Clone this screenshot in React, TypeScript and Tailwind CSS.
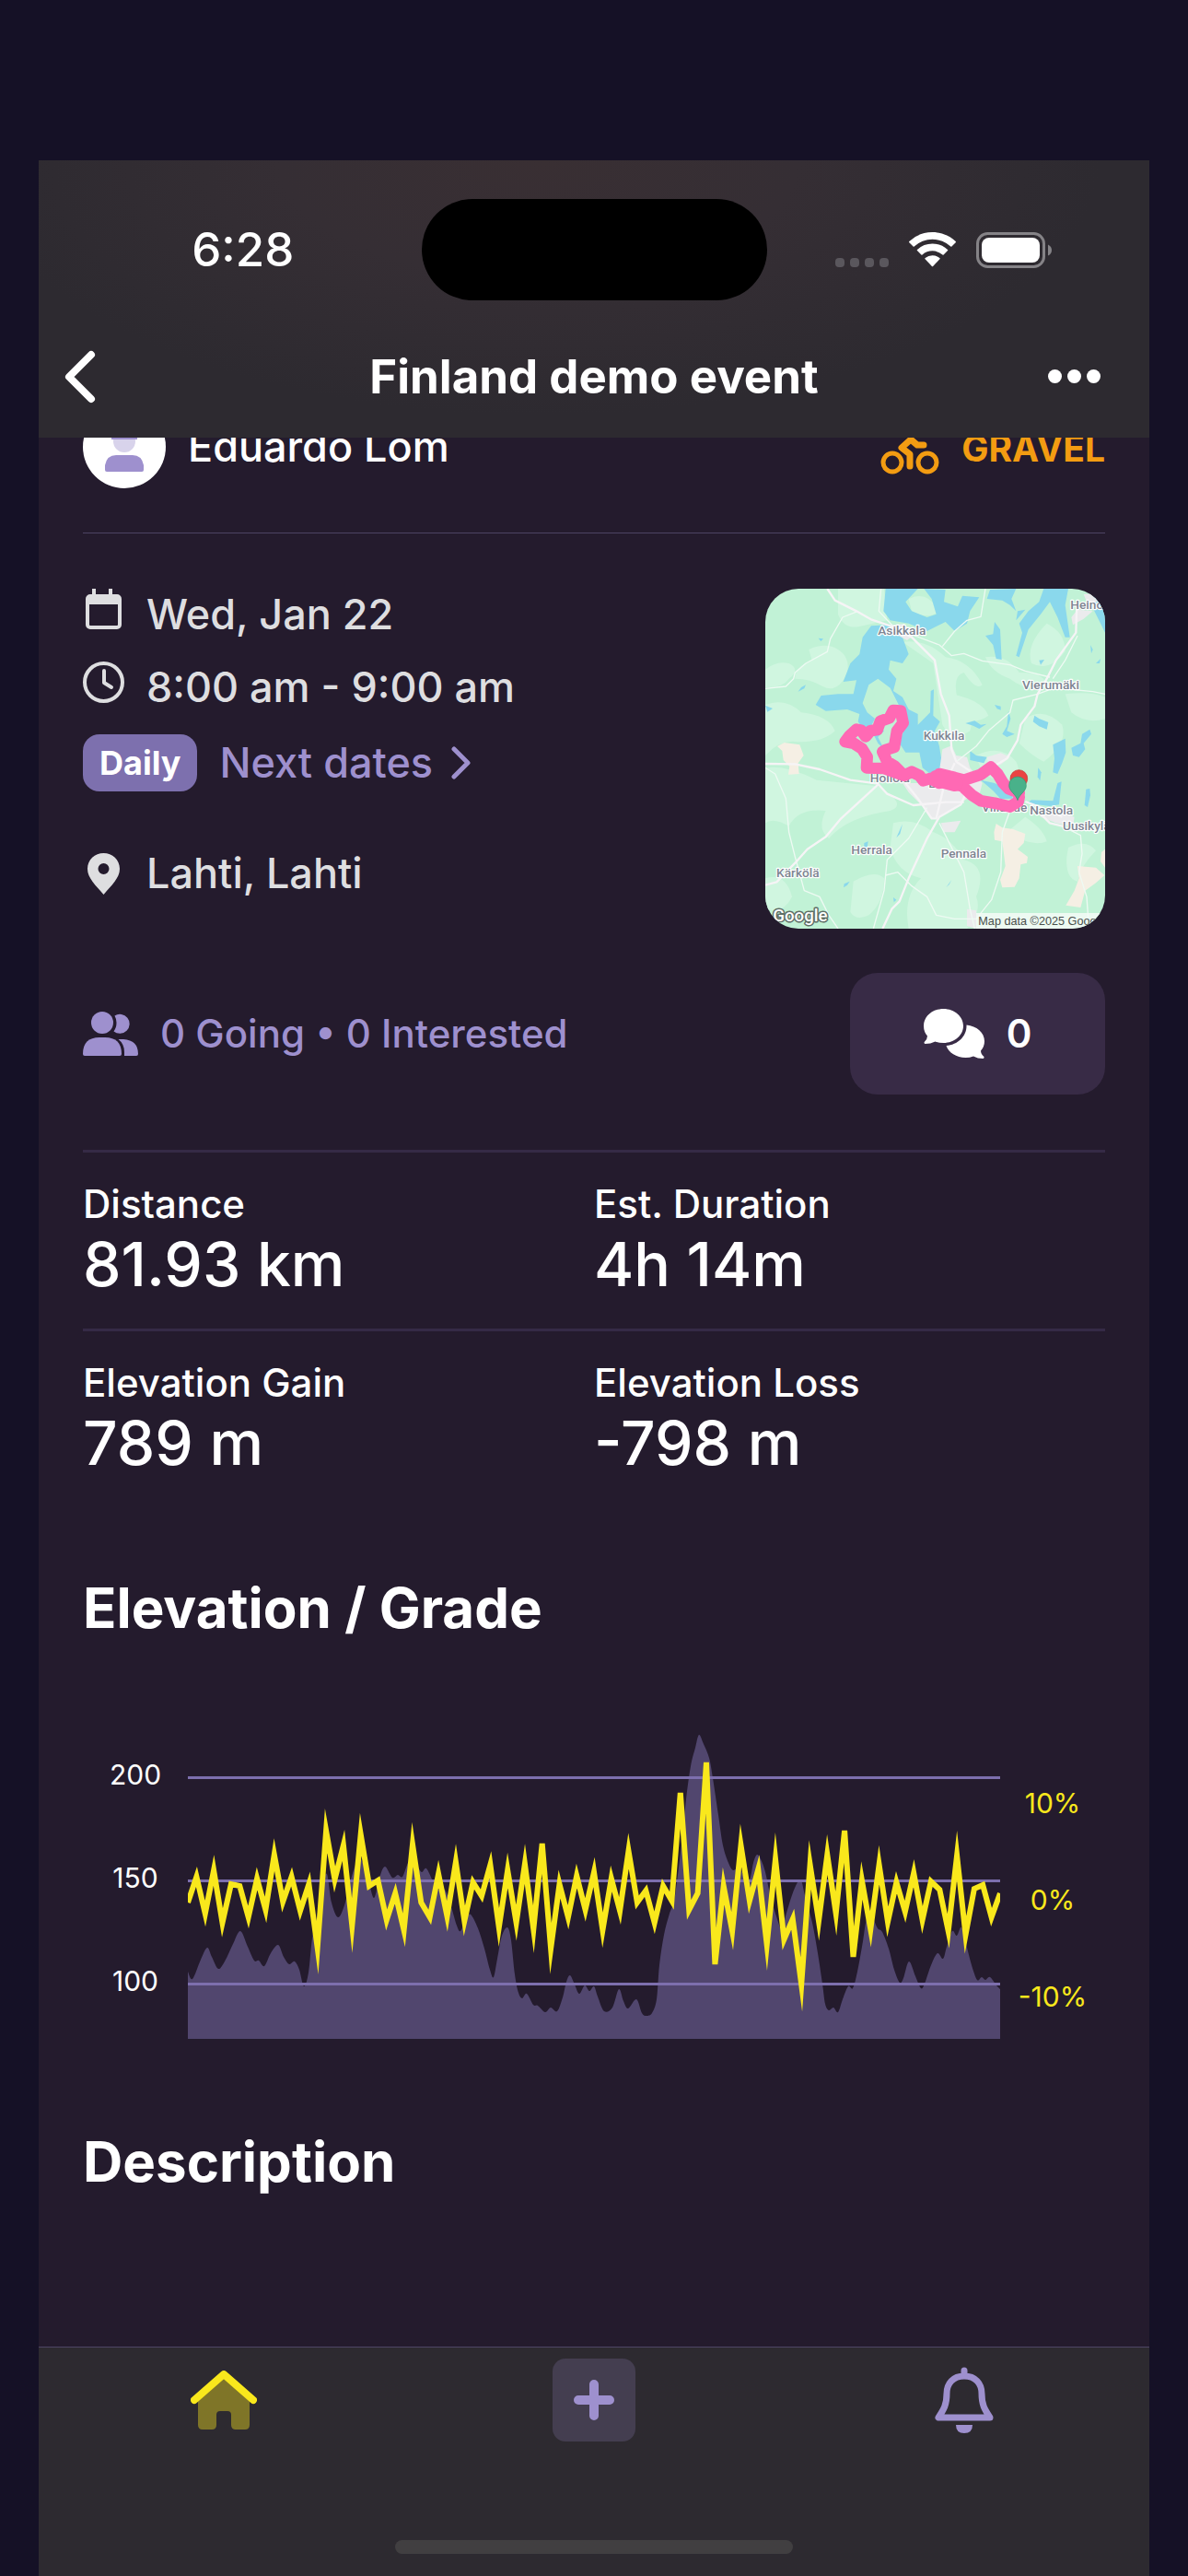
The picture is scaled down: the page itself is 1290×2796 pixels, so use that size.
type Point = [number, number];

const stats = [
  [
    { label: 'Distance', value: '81.93 km' },
    { label: 'Est. Duration', value: '4h 14m' },
  ],
  [
    { label: 'Elevation Gain', value: '789 m' },
    { label: 'Elevation Loss', value: '-798 m' },
  ],
];

// Plot area is 882 x 353, grade samples are evenly spaced
const PLOT_WIDTH = 882;
const PLOT_HEIGHT = 353;

const grade = [
  205, 177, 217, 170, 227, 185, 187, 221, 179, 213, 153, 204, 177, 214, 185, 254, 127, 180, 143, 230,
  131, 187, 181, 224, 195, 235, 142, 205, 221, 174, 220, 161, 225, 183, 198, 164, 232, 170, 227, 163,
  234, 141, 255, 185, 221, 176, 213, 172, 235, 179, 214, 149, 205, 192, 227, 187, 203, 86, 213, 195,
  53, 272, 187, 236, 143, 203, 169, 251, 158, 245, 223, 294, 164, 225, 153, 217, 127, 264, 181, 234,
  164, 226, 183, 215, 173, 224, 182, 191, 236, 154, 240, 190, 186, 221, 195,
];

const elevation: Point[] = [
  [0, 280], [5, 288], [14, 267], [21, 254], [26, 264], [33, 277], [40, 269], [49, 250], [57, 236],
  [65, 253], [72, 268], [77, 268], [83, 274], [90, 260], [98, 251], [104, 264], [110, 272], [116, 269],
  [121, 278], [126, 296], [131, 281], [135, 244], [141, 216], [146, 187], [151, 174], [156, 205],
  [163, 221], [170, 208], [177, 180], [183, 162], [188, 158], [195, 176], [202, 200], [208, 178],
  [214, 166], [222, 178], [228, 175], [233, 177], [239, 162], [244, 157], [250, 167], [254, 172],
  [259, 168], [266, 182], [271, 191], [279, 191], [286, 210], [292, 230], [296, 236], [302, 223],
  [307, 218], [315, 233], [322, 255], [328, 278], [332, 286], [336, 266], [341, 241], [347, 232],
  [351, 246], [355, 283], [359, 303], [363, 309], [368, 304], [375, 316], [380, 317], [388, 324],
  [394, 319], [401, 323], [407, 308], [411, 291], [415, 284], [420, 294], [425, 304], [431, 295],
  [436, 301], [441, 296], [445, 307], [452, 323], [461, 319], [468, 299], [473, 312], [478, 320],
  [487, 310], [493, 325], [498, 328], [504, 325], [509, 310], [512, 273], [517, 240], [523, 217],
  [528, 203], [533, 167], [537, 133], [541, 93], [546, 57], [551, 37], [555, 23], [560, 33], [566, 48],
  [570, 70], [576, 110], [581, 143], [587, 162], [592, 170], [599, 167], [604, 177], [610, 180],
  [614, 162], [618, 153], [622, 158], [627, 172], [633, 200], [639, 220], [645, 235], [649, 220],
  [656, 197], [662, 183], [666, 181], [670, 197], [678, 227], [684, 260], [689, 293], [692, 315],
  [696, 322], [701, 319], [706, 324], [711, 310], [717, 296], [722, 298], [727, 280], [733, 247],
  [736, 227], [740, 213], [744, 222], [749, 233], [754, 237], [761, 255], [767, 278], [773, 292],
  [777, 287], [783, 269], [790, 285], [796, 298], [800, 293], [807, 273], [814, 260], [820, 266],
  [824, 253], [830, 236], [835, 241], [840, 232], [845, 250], [851, 273], [857, 289], [862, 286],
  [866, 289], [871, 286], [878, 295], [882, 299],
];

const gridLines = [
  { y: 69, label: '200' },
  { y: 181, label: '150' },
  { y: 293, label: '100' },
];

const gradeTicks = [
  { y: 108, label: '10%' },
  { y: 213, label: '0%' },
  { y: 318, label: '-10%' },
];

function gradePoints() {
  const step = PLOT_WIDTH / (grade.length - 1);
  return grade.map((y, i) => `${(i * step).toFixed(1)},${y}`).join(' ');
}

// Catmull-Rom spline through the elevation samples, closed at the bottom
function elevationPath() {
  let d = `M0 ${PLOT_HEIGHT}L${elevation[0][0]} ${elevation[0][1]}`;
  for (let i = 0; i < elevation.length - 1; i++) {
    const p0 = elevation[Math.max(0, i - 1)];
    const p1 = elevation[i];
    const p2 = elevation[i + 1];
    const p3 = elevation[Math.min(elevation.length - 1, i + 2)];
    const c1 = [p1[0] + (p2[0] - p0[0]) / 6, p1[1] + (p2[1] - p0[1]) / 6];
    const c2 = [p2[0] - (p3[0] - p1[0]) / 6, p2[1] - (p3[1] - p1[1]) / 6];
    d += `C${c1.join(' ')} ${c2.join(' ')} ${p2.join(' ')}`;
  }
  return `${d}L${PLOT_WIDTH} ${PLOT_HEIGHT}Z`;
}

function ElevationChart() {
  return (
    <svg viewBox="0 0 1110 353" className="block w-full" role="img" aria-label="Elevation and grade">
      <defs>
        <clipPath id="plot">
          <rect width={PLOT_WIDTH} height={PLOT_HEIGHT} />
        </clipPath>
      </defs>
      <g transform="translate(114 0)">
        <path d={elevationPath()} fill="#51466e" />
        {gridLines.map(line => (
          <rect key={line.label} y={line.y - 1} width={PLOT_WIDTH} height="3" fill="#7d6fae" />
        ))}
        <polyline
          points={gradePoints()}
          fill="none"
          stroke="#f9e81c"
          strokeWidth="6"
          strokeMiterlimit="10"
          clipPath="url(#plot)"
        />
      </g>
      {gridLines.map(line => (
        <text key={line.label} x="57" y={line.y + 8} textAnchor="middle" fontSize="30" fill="#fff">
          {line.label}
        </text>
      ))}
      {gradeTicks.map(tick => (
        <text key={tick.label} x="1053" y={tick.y} textAnchor="middle" fontSize="30" fill="#f9e81c">
          {tick.label}
        </text>
      ))}
    </svg>
  );
}

const places = [
  { name: 'Asikkala', x: 478, y: 208 },
  { name: 'Vierumäki', x: 963, y: 384 },
  { name: 'Kukkila', x: 615, y: 550 },
  { name: 'Hollola', x: 439, y: 686 },
  { name: 'Lahti', x: 610, y: 704 },
  { name: 'Villähde', x: 812, y: 784 },
  { name: 'Nastola', x: 965, y: 792 },
  { name: 'Herrala', x: 380, y: 921 },
  { name: 'Pennala', x: 679, y: 932 },
  { name: 'Kärkölä', x: 139, y: 995 },
];

function RouteMap() {
  return (
    <svg
      viewBox="33 57 1107 1107"
      className="block aspect-square w-full font-[Roboto,sans-serif]"
      role="img"
      aria-label="Route map"
    >
      <rect x="33" y="57" width="1107" height="1107" fill="#c1f2d6" />
      {/* Fields */}
      <g fill="#d0f6e0">
        <path d="M33 320Q70 290 110 300Q150 320 110 350Q90 380 33 378Z" />
        <path d="M175 255Q230 230 270 255Q310 280 300 330Q270 400 220 375Q180 350 130 350Q130 310 185 290Z" />
        <path d="M33 435Q100 410 150 460Q240 470 260 520Q220 560 130 555Q80 550 33 600Z" />
        <path d="M270 57L420 57L430 160L340 180Q290 190 270 140Z" />
        <path d="M480 230Q560 220 620 280Q700 290 740 370Q720 390 680 330Q640 340 660 420Q720 460 700 520Q640 560 610 500L580 300Z" />
        <path d="M500 90Q560 60 600 130Q560 160 510 130Z" />
        <path d="M750 280Q820 270 860 330Q960 330 940 380Q880 390 830 350Q770 330 750 280Z" />
        <path d="M33 640Q100 630 200 680Q300 690 400 700Q500 760 440 780Q300 800 240 870Q200 840 230 780Q140 770 110 830Q60 800 33 820Z" />
        <path d="M450 820Q520 800 580 850Q640 870 680 940Q760 960 720 1060Q740 1110 690 1164L500 1164Q480 1060 540 1000Q460 980 440 900Z" />
        <path d="M33 1000Q100 980 120 1060Q90 1120 33 1100Z" />
        <path d="M320 1010Q390 970 420 1000Q420 1080 370 1120Q330 1140 310 1110Z" />
        <path d="M640 400Q740 420 760 470Q720 500 660 480Z" />
        <path d="M880 480Q940 440 1000 500Q1020 560 940 620Q900 600 860 560Z" />
        <path d="M1010 400Q1090 390 1140 410L1140 480Q1080 500 1030 460Z" />
        <path d="M1020 900Q1080 870 1110 910Q1060 960 1050 1010Q1010 1000 1015 930Z" />
        <path d="M950 170Q1010 200 1010 260Q960 330 900 300Q880 240 950 170Z" />
        <path d="M720 600Q800 560 850 620Q880 680 800 680Q740 680 720 600Z" />
        <path d="M820 850Q900 900 950 880Q940 840 880 800Z" />
      </g>
      {/* Lakes */}
      <g fill="#8ad8ec">
        <path d="M425 57L530 57L490 100L510 130L560 150L590 140L575 90L550 57L620 60L615 100L660 115L675 80L730 85L700 130L690 170L650 195L620 165L560 195L500 170L440 160L418 130Z" />
        <path d="M378 178L430 175L480 215L500 270L480 300L440 290L435 320L460 350L450 390L480 410L500 450L530 465L530 500L570 460L572 390L582 385L580 470L602 490L585 520L600 570L608 620L600 650L570 660L545 640L535 590L490 590L470 560L490 500L470 440L440 380L400 350L370 370L350 430L365 460L390 480L370 520L350 510L335 490L340 465L300 450L230 455L197 435L215 405L270 400L320 400L330 355L287 360L310 300L340 270L350 215Z" />
        <path d="M395 500L420 520L400 540L420 580L400 560L380 520Z" />
        <path d="M780 165L798 190L803 288L785 285L775 240L750 210L775 205Z" />
        <path d="M765 60L850 57L835 90L850 130L830 110L805 95L755 90Z" />
        <path d="M940 57L1020 57L1010 110L1025 215L1010 215L985 150L960 100L930 140L890 190L860 280L850 275L870 200L860 170L890 130L925 100Z" />
        <path d="M855 130L880 125L850 160Z" />
        <path d="M1100 57L1140 90L1140 200L1120 160L1100 120Z" />
        <path d="M1092 240L1100 255L1095 268Z" />
        <path d="M1110 300L1125 285L1122 300Z" />
        <path d="M925 290L942 288L930 305Z" />
        <path d="M206 218L222 220L214 228Z" />
        <path d="M140 392L150 378L165 370L160 382Z" />
        <path d="M33 437L57 447L40 458Z" />
        <path d="M685 495L715 487L735 500L754 497L730 513L710 503Z" />
        <path d="M910 470L925 480L955 492L950 515L925 505L905 490Z" />
        <path d="M780 435L800 440L800 452L788 448Z" />
        <path d="M825 455L832 480L820 520L845 530L820 540L805 530L820 505Z" />
        <path d="M700 585L720 600L755 605L745 625L700 615Z" />
        <path d="M970 565L1010 545L1012 590L1000 625L985 660L970 655L975 610Z" />
        <path d="M1035 600L1030 575L1060 560L1065 530L1090 515L1095 530L1070 560L1075 580L1055 605Z" />
        <path d="M1078 710L1090 708L1092 730L1083 768L1073 762Z" />
        <path d="M985 690L998 685L990 760L960 765L885 755L900 745L970 748Z" />
        <path d="M922 640L932 655L928 682L920 670Z" />
        <path d="M735 680L780 690L830 715L840 740L800 742L775 715Z" />
        <path d="M288 1030L290 1018L308 1010L300 1022Z" />
        <path d="M622 1030L640 1005L632 1020Z" />
        <path d="M460 868L480 823L472 855Z" />
        <path d="M355 885L368 880L365 900L355 900Z" />
        <path d="M450 1062L460 1070L452 1078Z" />
      </g>
      {/* Towns and bare ground */}
      <path d="M72 570L95 558L145 565L158 600L140 625L143 660L108 662L112 635L92 615L88 585Z" fill="#f5efe4" />
      <path d="M785 822L805 835L840 840L880 855L875 885L855 905L888 930L885 950L865 955L860 1000L845 1028L805 1030L798 1005L815 960L805 880L780 875L778 850Z" fill="#f5efe4" />
      <path d="M1050 960L1110 965L1138 990L1110 1015L1075 1040L1060 1095L1012 1088L1040 1040L1055 1000Z" fill="#f5efe4" />
      <path d="M1128 915L1140 905L1140 965L1125 945Z" fill="#f5efe4" />
      <g fill="#ebebed">
        <path d="M610 580L640 568L655 600L690 605L700 640L740 690L730 730L690 740L650 770L600 800L570 805L545 765L500 720L480 690L560 690L600 650Z" />
        <path d="M755 605L800 592L830 605L800 630L760 630Z" />
        <path d="M605 820L670 812L650 850L615 850Z" />
        <path d="M920 780L1010 790L1040 800L1035 830L980 820L930 800Z" />
        <path d="M445 175L485 172L520 205L495 225L450 200Z" />
        <path d="M1030 150L1050 125L1100 130L1070 155L1035 175Z" />
        <path d="M1070 75L1140 70L1140 100L1080 100Z" />
        <path d="M690 1100L720 1105L720 1164L690 1155Z" />
      </g>
      {/* Minor roads */}
      <g fill="none" stroke="#eefaf3" strokeWidth="4" strokeLinejoin="round">
        <path d="M33 382L100 375L125 350L130 330L165 300L235 262L245 220L285 150L335 130" />
        <path d="M410 57L403 130L450 180" />
        <path d="M520 210L600 240L640 275L680 268L740 292L830 305L880 325L960 345" />
        <path d="M610 245L650 195L690 160L735 148L750 57" />
        <path d="M655 620L720 570L760 520L830 460L840 420L920 400L975 380L1100 392L1140 400" />
        <path d="M1050 210L1010 290L970 350" />
        <path d="M33 640L65 660L100 740L110 850L130 930L160 1040L210 1060L240 1120L270 1164" />
        <path d="M385 1164L420 1040L430 940L500 870L560 770" />
        <path d="M600 820L640 900L680 980L700 1100L715 1164" />
        <path d="M425 990L465 980L510 1025L560 1060L590 1120L650 1132L720 1132L770 1070L800 980L805 850L830 780" />
        <path d="M1000 830L1060 860L1065 920L1055 980L1080 1060L1085 1130" />
      </g>
      {/* Main roads */}
      <g fill="none" stroke="#f6f4f6" strokeWidth="7" strokeLinejoin="round">
        <path d="M235 57L260 95L330 130L380 158L440 178L510 215L585 290L605 400L632 470L640 580L655 620L700 650" />
        <path d="M33 627L130 628L210 645L310 680L400 692L430 725L515 762L620 752L680 752" />
        <path d="M33 1022L70 1012L130 950L170 905L230 865L280 805L400 695" />
        <path d="M415 1164L445 1100L470 1075L500 1000L560 870L600 800L670 760L690 715" />
        <path d="M490 690L530 740L575 805L590 805L615 700L650 625" />
        <path d="M1048 100L1045 200L980 290L950 350L920 400L910 440L865 500L855 550L820 610L770 640" />
        <path d="M880 750L960 780L1000 800" />
        <path d="M920 780L960 820L1010 832" />
      </g>
      {/* Place names */}
      <g
        fill="#7e8592"
        stroke="#ffffff"
        strokeWidth="7"
        strokeLinejoin="round"
        paintOrder="stroke"
        fontSize="41"
        fontWeight="500"
        textAnchor="middle"
      >
        {places.map(place => (
          <text key={place.name} x={place.x} y={place.y}>{place.name}</text>
        ))}
        <text x="1027" y="123" textAnchor="start">Heinola</text>
        <text x="1002" y="844" textAnchor="start">Uusikylä</text>
      </g>
      {/* Route */}
      <path
        d="M860 735L857 750L830 767L780 755L735 748L705 728L675 700L640 690L605 665L600 690L570 675L548 682L535 665L510 653L485 665L455 635L430 620L415 588L425 582L453 573L462 520L482 494L474 455L450 453L437 478L408 488L398 516L375 520L360 538L345 518L330 515L308 535L293 555L320 560L348 578L365 605L363 640L420 642L485 665M600 660L650 672L680 680L735 662L768 638L790 660L808 690L825 708L860 722"
        fill="none"
        stroke="#ff69b4"
        strokeWidth="38"
        strokeLinecap="round"
        strokeLinejoin="round"
      />
      <path d="M590 675L650 690" stroke="#ff69b4" strokeWidth="54" strokeLinecap="round" />
      <path d="M859 647A28 28 0 0 1 887 676C887 695 866 705 859 724C852 705 831 695 831 676A28 28 0 0 1 859 647Z" fill="#ea4343" stroke="#c03333" strokeWidth="2" />
      <path d="M855 669A28 28 0 0 1 883 698C883 717 862 724 855 746C848 724 827 717 827 698A28 28 0 0 1 855 669Z" fill="#49b18a" stroke="#35946f" strokeWidth="2" />
      {/* Attribution */}
      <text x="58" y="1139" fontSize="56" fontWeight="500" fill="#fff" stroke="#5e6e66" strokeWidth="9" paintOrder="stroke" strokeLinejoin="round">Google</text>
      <rect x="720" y="1113" width="420" height="51" fill="#f4fbf7" fillOpacity="0.85" />
      <text x="727" y="1151" fontSize="38" fill="#4a4f4c" className="font-['Liberation_Sans',sans-serif]">Map data ©2025 Google</text>
    </svg>
  );
}

function StatusBar() {
  return (
    <div className="grid grid-cols-[1fr_375px_1fr] items-center">
      <div className="flex justify-center pl-7 text-[51px] leading-[60px] font-medium">6:28</div>
      <div className="h-[110px] rounded-full bg-black" />
      <div className="flex items-center justify-center gap-[22px] pr-8">
        <div className="flex gap-[6px] pt-7">
          {[0, 1, 2, 3].map(dot => (
            <span key={dot} className="size-[10px] rounded-[4px] bg-[#5a575d]" />
          ))}
        </div>
        <svg viewBox="0 0 51 38" className="h-[38px] w-[51px]" fill="#fff">
          <path d="M25.500 0C35.300 0 44.200 3.800 50.700 10Q51.300 10.600 50.700 11.200L46.400 15.500Q45.900 16 45.300 15.500A29 29 0 0 0 5.700 15.500Q5.100 16 4.600 15.500L.3 11.200Q-.3 10.600.3 10A36.500 36.500 0 0 1 25.500 0Z" />
          <path d="M25.500 12.500C31.900 12.500 37.700 14.900 42 18.900Q42.600 19.500 42 20.100L37.600 24.500Q37.100 25 36.500 24.500A16.600 16.600 0 0 0 14.500 24.500Q13.900 25 13.400 24.500L9 20.100Q8.400 19.500 9 18.900A24.400 24.400 0 0 1 25.500 12.500Z" />
          <path d="M25.500 25.300C28.500 25.300 31.200 26.300 33.300 28.100Q34 28.700 33.400 29.300L26.100 36.900Q25.500 37.500 24.900 36.900L17.600 29.300Q17 28.700 17.700 28.100A12 12 0 0 1 25.500 25.300Z" />
        </svg>
        <svg viewBox="0 0 82 39" className="h-[39px] w-[82px]">
          <rect x="1.500" y="1.500" width="72" height="36" rx="11" fill="none" stroke="#858387" strokeWidth="3" />
          <rect x="6" y="6" width="63" height="27" rx="8" fill="#fff" />
          <path d="M78 13.500Q82 15.500 82 19.500Q82 23.500 78 25.500Z" fill="#858387" />
        </svg>
      </div>
    </div>
  );
}

function Header() {
  return (
    <header className="relative z-10 bg-[#2d2a30] bg-[radial-gradient(ellipse_at_45%_0%,#392f33_0%,#352e34_30%,transparent_65%)] pt-[42px]">
      <StatusBar />
      <div className="mt-4 grid h-[133px] grid-cols-[1fr_auto_1fr] items-center pr-[53px] pl-[28px]">
        <button type="button" aria-label="Back" className="justify-self-start">
          <svg viewBox="0 0 34 58" className="h-[58px] w-[34px]" fill="none" stroke="#fff" strokeWidth="8" strokeLinecap="round" strokeLinejoin="round">
            <path d="M29 5L5 29L29 53" />
          </svg>
        </button>
        <h1 className="pl-[25px] text-[51px] leading-[60px] font-bold">Finland demo event</h1>
        <button type="button" aria-label="More" className="flex gap-[6px] justify-self-end">
          <span className="size-[15px] rounded-full bg-white" />
          <span className="size-[15px] rounded-full bg-white" />
          <span className="size-[15px] rounded-full bg-white" />
        </button>
      </div>
    </header>
  );
}

function TabBar() {
  return (
    <footer className="border-t border-[#4e4565] bg-[#2d2a30] pt-3 pb-6">
      <nav className="grid h-[90px] grid-cols-3 items-center justify-items-center">
        <button type="button" aria-label="Home">
          <svg viewBox="0 0 72 64" className="h-[64px] w-[72px]">
            <path d="M36 8L64 33V59Q64 64 59 64H49Q44 64 44 59V48Q44 44 40 44H32Q28 44 28 48V59Q28 64 23 64H13Q8 64 8 59V33Z" fill="#7f7528" />
            <path d="M4 32L36 4L68 32" fill="none" stroke="#f9e81c" strokeWidth="8" strokeLinecap="round" strokeLinejoin="round" />
          </svg>
        </button>
        <button type="button" aria-label="Create" className="flex size-[90px] items-center justify-center rounded-[14px] bg-[#443e50]">
          <svg viewBox="0 0 44 44" className="size-[44px]" stroke="#9e90ce" strokeWidth="10" strokeLinecap="round">
            <path d="M22 5V39M5 22H39" />
          </svg>
        </button>
        <button type="button" aria-label="Notifications">
          <svg viewBox="0 0 64 72" className="h-[72px] w-[64px]">
            <path d="M32 4V10M32 10C20 10 13 18 13 29C13 41 10 46 4 55H60C54 46 51 41 51 29C51 18 44 10 32 10Z" fill="none" stroke="#9e90ce" strokeWidth="7" strokeLinecap="round" strokeLinejoin="round" />
            <path d="M23 63H41Q41 72 32 72Q23 72 23 63Z" fill="#9e90ce" />
          </svg>
        </button>
      </nav>
      <div className="mx-auto mt-[107px] h-[15px] w-[432px] rounded-full bg-[#413f41]" />
    </footer>
  );
}

export default function App() {
  return (
    <div className="flex min-h-screen flex-col bg-[#151126] px-[42px] pt-[174px] font-[Inter,sans-serif] text-white">
      <Header />

      <main className="flex-1 overflow-hidden bg-[#241b2d] px-12">
        {/* Organizer, scrolled partly under the header */}
        <div className="-mt-[35px] flex h-[90px] items-center justify-between">
          <div className="flex items-center gap-6">
            <svg viewBox="0 0 90 90" className="size-[90px]">
              <circle cx="45" cy="45" r="45" fill="#fff" />
              <circle cx="45" cy="39" r="12" fill="#d8d3eb" />
              <path d="M31 37V30Q31 22 45 22Q59 22 59 30V37Z" fill="#9e90ce" />
              <path d="M24 70V65Q26 54 36 54H54Q64 54 66 65V70Q66 72 64 72H26Q24 72 24 70Z" fill="#9e90ce" />
            </svg>
            <span className="text-[45px] leading-[54px] font-medium">Eduardo Lom</span>
          </div>
          <div className="flex items-center gap-6 pt-1 text-[#f39c12]">
            <svg viewBox="0 0 64 58" className="h-[58px] w-[64px]" fill="none" stroke="currentColor" strokeWidth="6" strokeLinecap="round" strokeLinejoin="round">
              <circle cx="13" cy="44" r="10" strokeWidth="5" />
              <circle cx="51" cy="44" r="10" strokeWidth="5" />
              <path d="M47 25H40L33 19L23 28L32 35V48" strokeWidth="7" />
            </svg>
            <span className="text-[39px] leading-[54px] font-bold">GRAVEL</span>
          </div>
        </div>

        <div className="mt-12 h-px bg-[#4c4363]" />

        <section className="flex justify-between pt-[60px] text-[45px] leading-[56px] font-medium text-[#dedee0]">
          <div>
            <div className="flex gap-6">
              <svg viewBox="0 0 45 45" className="size-[45px]">
                <rect x="5" y="8" width="35" height="34" rx="3" fill="none" stroke="#dedee0" strokeWidth="4" />
                <path d="M5 7H40V17H5ZM10 0H14V8H10ZM28 0H32V8H28Z" fill="#dedee0" />
              </svg>
              <span>Wed, Jan 22</span>
            </div>
            <div className="mt-[23px] flex gap-6">
              <svg viewBox="0 0 45 45" className="size-[45px]" fill="none" stroke="#dedee0" strokeWidth="4" strokeLinecap="round" strokeLinejoin="round">
                <circle cx="22.500" cy="22.500" r="20.500" />
                <path d="M23 10V23L31 28" />
              </svg>
              <span>8:00 am - 9:00 am</span>
            </div>
            <div className="mt-[23px] flex items-center gap-6">
              <span className="rounded-[18px] bg-[#7d70ae] px-[18px] text-[36px] leading-[62px] font-bold text-white">Daily</span>
              <button type="button" className="flex items-center gap-5 text-[#9e90ce]">
                Next dates
                <svg viewBox="0 0 21 36" className="h-[36px] w-[21px]" fill="none" stroke="currentColor" strokeWidth="5" strokeLinecap="round" strokeLinejoin="round">
                  <path d="M3 3L18 18L3 33" />
                </svg>
              </button>
            </div>
            <div className="mt-[61px] flex items-center gap-6">
              <svg viewBox="0 0 45 45" className="size-[45px]">
                <path d="M22.500 0C32 0 40 7 40 17C40 27 31 35 22.500 45C14 35 5 27 5 17C5 7 13 0 22.500 0ZM22.500 11A6 6 0 1 0 22.500 23A6 6 0 1 0 22.500 11Z" fill="#dedee0" />
              </svg>
              <span>Lahti, Lahti</span>
            </div>
          </div>
          <div className="h-[369px] w-[369px] overflow-hidden rounded-[36px]">
            <RouteMap />
          </div>
        </section>

        <div className="mt-12 flex items-center justify-between text-[42px] leading-[52px] font-medium">
          <button type="button" className="flex items-center gap-6 text-[#9e90ce]">
            <svg viewBox="0 0 60 48" className="h-[48px] w-[60px]" fill="currentColor">
              <circle cx="21" cy="12" r="12" />
              <path d="M34.500 4.500A10.500 10.500 0 1 1 33.500 21.500Q36.500 17.500 36.500 12Q36.500 8 34.500 4.500Z" />
              <path d="M0 46Q0 28 18 28H24Q42 28 42 46Q42 48 40 48H2Q0 48 0 46Z" />
              <path d="M38.500 30H44Q60 31 60 46Q60 48 58 48H45V44Q45 35 38.500 30Z" />
            </svg>
            <span>0 Going • 0 Interested</span>
          </button>
          <button type="button" className="flex h-[132px] w-[277px] items-center justify-center gap-6 rounded-[30px] bg-[#382b46] font-semibold">
            <svg viewBox="0 0 66 54" className="h-[54px] w-[66px]" fill="#fff">
              <path d="M21.500 0C33.500 0 43 8.300 43 18.500S33.500 37 21.500 37Q16.500 37 12.500 35.500Q7.500 38 1.500 38Q0 37.500 .7 36Q4 33 4 29.500Q0 25 0 18.500C0 8.300 9.500 0 21.500 0Z" />
              <path d="M46.500 17.500C57.500 18.500 66 26 66 35Q66 41 62 45.500Q62 49 65.500 52Q66 53.500 64.500 54Q58.500 54 54 51.500Q50 53 45.500 53C35.500 53 27 47.500 24.500 40C37 39 46.500 30 46.500 18.500Z" />
            </svg>
            0
          </button>
        </div>

        <dl className="mt-[60px] font-medium">
          {stats.map((row, index) => (
            <div key={index} className="grid grid-cols-2 border-t-3 border-[#352a46] pt-[30px] pb-[31px]">
              {row.map(stat => (
                <div key={stat.label}>
                  <dt className="text-[42px] leading-[52px]">{stat.label}</dt>
                  <dd className="text-[66px] leading-[78px]">{stat.value}</dd>
                </div>
              ))}
            </div>
          ))}
        </dl>

        <h2 className="mt-[73px] text-[60px] leading-[72px] font-bold">Elevation / Grade</h2>
        <div className="mt-[79px]">
          <ElevationChart />
        </div>

        <h2 className="mt-[97px] mb-20 text-[60px] leading-[72px] font-bold">Description</h2>
      </main>

      <TabBar />
    </div>
  );
}
